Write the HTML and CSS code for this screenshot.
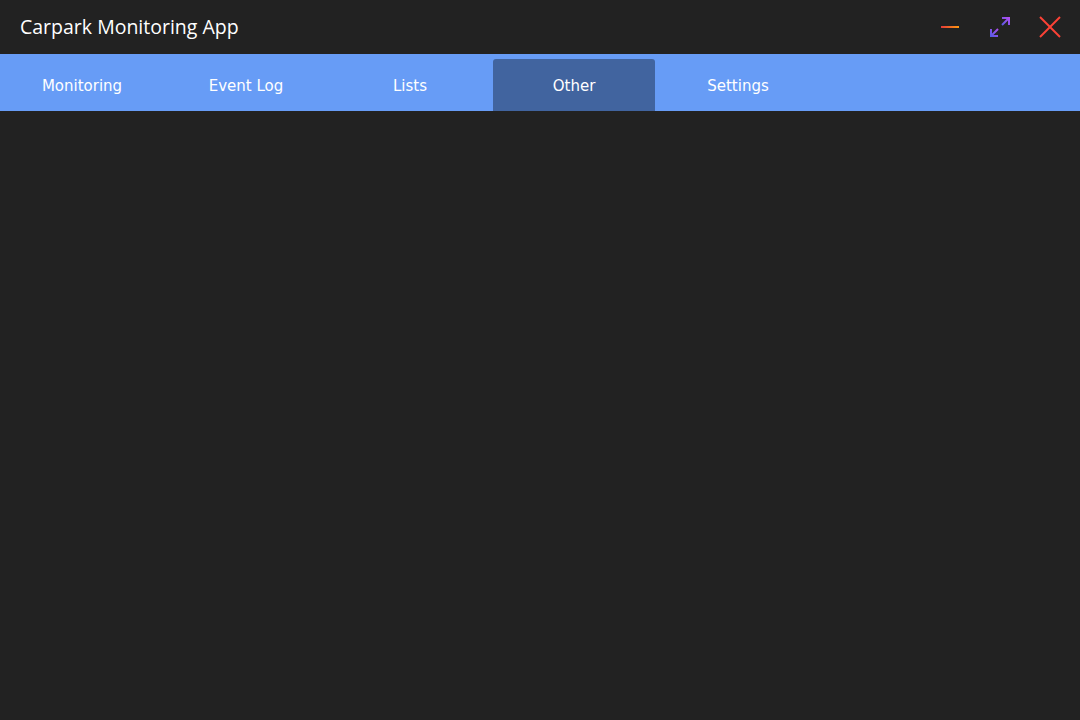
FILE: index.html
```html
<!DOCTYPE html>
<html>
<head>
<meta charset="utf-8">
<link rel="stylesheet" href="styles.css">
</head>
<body>
<div class="app">
  <header class="titlebar">
    <div class="title">Carpark Monitoring App</div>
    <div class="controls">
      <button class="ctl">
        <svg width="20" height="20" viewBox="0 0 20 20">
          <defs><linearGradient id="gmin" x1="0" x2="1" y1="0" y2="0"><stop offset="0" stop-color="#e43a3a"/><stop offset="1" stop-color="#ff9a10"/></linearGradient></defs>
          <rect x="1" y="9" width="18" height="2" fill="url(#gmin)"/>
        </svg>
      </button>
      <button class="ctl">
        <svg width="22" height="22" viewBox="0 0 22 22">
          <defs><linearGradient id="gmax" x1="0" x2="1" y1="1" y2="0"><stop offset="0" stop-color="#5a5ae6"/><stop offset="1" stop-color="#b04ef0"/></linearGradient></defs>
          <g stroke="url(#gmax)" stroke-width="2" fill="none">
            <path d="M2 20 L9 13"/><path d="M2 13 V20 H9"/>
            <path d="M20 2 L13 9"/><path d="M13 2 H20 V9"/>
          </g>
        </svg>
      </button>
      <button class="ctl">
        <svg width="22" height="22" viewBox="0 0 22 22">
          <g stroke="#fc4236" stroke-width="2"><path d="M1 1 L21 21"/><path d="M21 1 L1 21"/></g>
        </svg>
      </button>
    </div>
  </header>
  <nav class="tabs">
    <div class="tab">Monitoring</div>
    <div class="tab">Event Log</div>
    <div class="tab">Lists</div>
    <div class="tab active">Other</div>
    <div class="tab">Settings</div>
  </nav>
  <main class="content"></main>
</div>
</body>
</html>
```

FILE: styles.css
```css
* { box-sizing: border-box; }
html, body { margin: 0; padding: 0; }
body { background: #222222; width: 1080px; height: 720px; overflow: hidden; }
.app { display: flex; flex-direction: column; height: 720px; }
.titlebar {
  height: 54px;
  display: flex;
  align-items: center;
  justify-content: space-between;
  padding-left: 20px;
  padding-right: 10px;
  background: #222222;
}
.title {
  font-family: "Open Sans", "Noto Sans", sans-serif;
  font-size: 19.5px;
  color: #ffffff;
  padding-bottom: 1px;
}
.controls { display: flex; gap: 10px; align-items: center; }
.ctl {
  width: 40px; height: 40px;
  border: 0; background: transparent; padding: 0;
  display: flex; align-items: center; justify-content: center;
}
.tabs {
  height: 57px;
  background: #679cf6;
  display: flex;
  align-items: flex-end;
}
.tab {
  width: 162px;
  margin: 0 1px;
  height: 52px;
  display: flex;
  align-items: center;
  justify-content: center;
  font-family: "DejaVu Sans", sans-serif;
  font-size: 15px;
  color: #ffffff;
  padding-top: 1px;
  border-radius: 3px 3px 0 0;
}
.tab.active { background: #41649f; }
.content { flex: 1; background: #222222; }
```
